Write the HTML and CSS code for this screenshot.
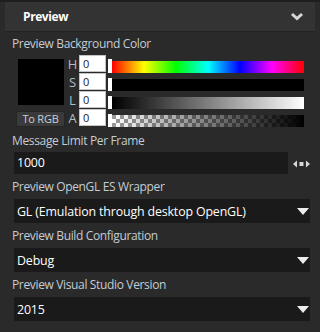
FILE: index.html
```html
<!DOCTYPE html>
<html>

<head>
    <title>Preview</title>
    <meta charset="utf-8">
    <link rel="stylesheet" href="styles.css">
</head>

<body>
    <div class="topLine"></div>
    <div class="cabecera">
        <span>Preview</span>
        <svg class="chevron" width="14" height="9" viewBox="0 0 14 9"><polyline points="2,2 7,6.5 12,2" fill="none" stroke="#d6d6d6" stroke-width="3"/></svg>
    </div>

    <div class="contenido">
        <div class="etiqueta primera">Preview Background Color</div>
        <div class="selector">
            <div class="muestraCol">
                <div class="muestra"></div>
                <div class="botonRgb">To RGB</div>
            </div>
            <div class="filas">
                <div class="fila">
                    <span class="letra">H</span><span class="numero">0</span>
                    <span class="pulgar alto"></span><span class="barra tono"></span>
                </div>
                <div class="fila">
                    <span class="letra">S</span><span class="numero">0</span>
                    <span class="pulgar"></span><span class="barra negra"></span>
                </div>
                <div class="fila">
                    <span class="letra">L</span><span class="numero">0</span>
                    <span class="pulgar"></span><span class="barra luz"></span>
                </div>
                <div class="fila">
                    <span class="letra">A</span><span class="numero">0</span>
                    <span class="pulgar"></span><span class="barra alfa"></span>
                </div>
            </div>
        </div>

        <div class="etiqueta mensaje">Message Limit Per Frame</div>
        <div class="filaMensaje">
            <div class="entrada">1000</div>
            <svg class="flechas" width="17" height="8" viewBox="0 0 17 8"><polygon points="0,4 4,0.5 4,7.5" fill="#d8d8d8"/><rect x="6.5" y="2" width="4" height="4" fill="#d8d8d8"/><polygon points="17,4 13,0.5 13,7.5" fill="#d8d8d8"/></svg>
        </div>

        <div class="etiqueta">Preview OpenGL ES Wrapper</div>
        <div class="desplegable"><span>GL (Emulation through desktop OpenGL)</span><span class="triangulo"></span></div>

        <div class="etiqueta">Preview Build Configuration</div>
        <div class="desplegable"><span>Debug</span><span class="triangulo"></span></div>

        <div class="etiqueta">Preview Visual Studio Version</div>
        <div class="desplegable"><span>2015</span><span class="triangulo"></span></div>
    </div>
</body>

</html>
```

FILE: styles.css
```css
body {
    margin: 0;
    background-color: #2a2a2a;
    font-family: "Open Sans", sans-serif;
    overflow: hidden;
}

.topLine {
    height: 2px;
    background-color: #1e1e1e;
}

.cabecera {
    margin: 0 5px;
    height: 29px;
    background-color: #333333;
    border-bottom: 1px solid #232323;
    display: flex;
    align-items: center;
    justify-content: space-between;
    padding: 0 11px 0 18px;
    color: #ffffff;
    font-weight: bold;
    font-size: 12px;
    letter-spacing: -0.4px;
}

.chevron {
    display: block;
}

.contenido {
    padding: 0 10px 0 12px;
}

.etiqueta {
    color: #c4ccd4;
    font-size: 12px;
    letter-spacing: -0.35px;
    line-height: 16px;
    height: 16px;
    margin-top: 5px;
    margin-bottom: 4px;
}

.primera {
    margin-top: 4px;
    margin-bottom: 3px;
}

.selector {
    display: flex;
    margin-left: 4px;
}

.muestraCol {
    width: 49px;
    display: flex;
    flex-direction: column;
    align-items: center;
}

.muestra {
    width: 46px;
    height: 46px;
    margin-top: 4px;
    background-color: #000000;
}

.botonRgb {
    margin-top: 6px;
    width: 49px;
    height: 16px;
    box-sizing: border-box;
    border: 1px solid #262626;
    border-radius: 2px;
    background-color: #3a3a3a;
    color: #c8d0d8;
    font-size: 11px;
    letter-spacing: -0.2px;
    line-height: 14px;
    text-align: center;
}

.filas {
    display: flex;
    flex-direction: column;
}

.fila {
    display: flex;
    height: 18px;
    align-items: flex-end;
}

.letra {
    width: 13px;
    margin-left: 1px;
    align-self: center;
    text-align: center;
    color: #b4bcc4;
    font-size: 13px;
    line-height: 18px;
}

.numero {
    align-self: flex-start;
    width: 27px;
    height: 17px;
    box-sizing: border-box;
    border: 1px solid #c4c4c4;
    background-color: #ffffff;
    color: #1a1a1a;
    font-size: 11px;
    line-height: 15px;
    padding-left: 3px;
}

.pulgar {
    margin-left: 2px;
    width: 4px;
    height: 13px;
    background-color: #ffffff;
}

.pulgar.alto {
    height: 14px;
}

.barra {
    width: 192px;
    height: 12px;
}

.tono {
    background: linear-gradient(to right, #ff0000, #ffff00, #00ff00, #00ffff, #0000ff, #ff00ff, #ff0000);
}

.negra {
    background-color: #000000;
}

.luz {
    background: linear-gradient(to right, #000000, #ffffff);
}

.alfa {
    background:
        linear-gradient(to right, rgba(0, 0, 0, 0), #000000),
        conic-gradient(#ffffff 25%, #9a9a9a 0 50%, #ffffff 0 75%, #9a9a9a 0) 0 0 / 8px 8px;
}

.mensaje {
    margin-top: 6px;
    margin-bottom: 3px;
}

.filaMensaje {
    display: flex;
    align-items: center;
    margin-left: 2px;
}

.entrada {
    width: 272px;
    height: 22px;
    background-color: #1a1a1a;
    color: #ffffff;
    font-size: 12.4px;
    letter-spacing: -0.2px;
    line-height: 22px;
    padding-left: 3px;
}

.flechas {
    margin-left: 5px;
    margin-top: 2px;
}

.desplegable {
    margin-left: 2px;
    width: 296px;
    height: 24px;
    box-sizing: border-box;
    background-color: #1a1a1a;
    color: #ffffff;
    font-size: 12.4px;
    letter-spacing: -0.15px;
    display: flex;
    align-items: center;
    justify-content: space-between;
    padding: 0 1px 0 3px;
}

.triangulo {
    width: 0;
    height: 0;
    border-left: 6px solid transparent;
    border-right: 6px solid transparent;
    border-top: 7px solid #ececec;
    margin-top: 1px;
}
```
